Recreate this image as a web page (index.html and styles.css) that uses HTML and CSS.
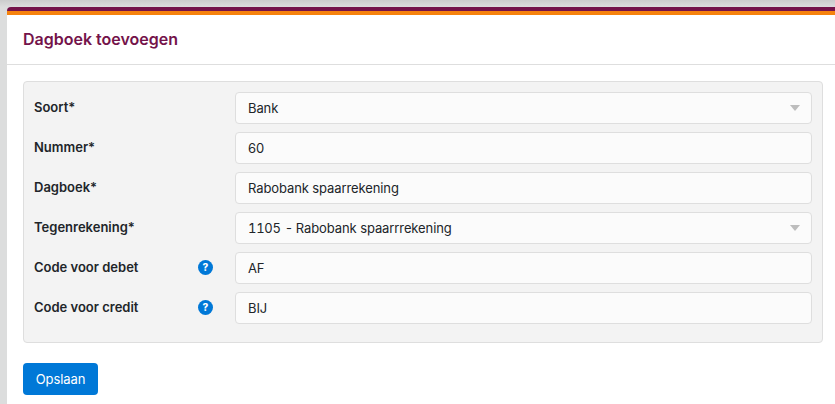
FILE: index.html
```html
<!DOCTYPE html>
<html lang="nl">
<head>
<meta charset="utf-8">
<title>Dagboek toevoegen</title>
<link rel="stylesheet" href="styles.css">
</head>
<body>
<main class="card">
  <header class="card-head"><h1>Dagboek toevoegen</h1></header>
  <form class="card-body">
    <div class="panel">
      <div class="row">
        <label class="lbl">Soort*</label>
        <div class="field select">Bank<span class="caret"></span></div>
      </div>
      <div class="row">
        <label class="lbl">Nummer*</label>
        <div class="field">60</div>
      </div>
      <div class="row">
        <label class="lbl">Dagboek*</label>
        <div class="field">Rabobank spaarrekening</div>
      </div>
      <div class="row">
        <label class="lbl">Tegenrekening*</label>
        <div class="field select"><span class="acct">1105 -</span>Rabobank spaarrrekening<span class="caret"></span></div>
      </div>
      <div class="row">
        <label class="lbl">Code voor debet<span class="help">?</span></label>
        <div class="field">AF</div>
      </div>
      <div class="row">
        <label class="lbl">Code voor credit<span class="help">?</span></label>
        <div class="field">BIJ</div>
      </div>
    </div>
    <button type="button" class="btn">Opslaan</button>
  </form>
</main>
</body>
</html>
```
FILE: styles.css
```css
* { box-sizing: border-box; }
html, body { margin: 0; height: 100%; }
body {
  padding: 7px 0 0 7px;
  overflow: hidden;
  background: linear-gradient(#cbcccc 0, #dcdddd 7px, #dcdddd 100%);
  font-family: Inter, "Liberation Sans", sans-serif;
  font-size: 14px;
  color: #212529;
}
.card {
  background: #fff;
  height: 397px;
  border-top: 4px solid #74134a;
  border-top-left-radius: 4px;
  position: relative;
}
.card-head {
  border-top: 4px solid #f5820d;
  height: 54px;
  border-bottom: 1px solid #dedede;
  padding: 0 16px;
  display: flex;
  align-items: center;
}
.card-head h1 {
  margin: 0 0 2px;
  font-size: 16px;
  font-weight: 600;
  color: #74134a;
}
.card-body { padding: 16px 12px 0 16px; }
.panel {
  background: #f3f3f3;
  border: 1px solid #dedede;
  border-radius: 4px;
  padding: 10px;
  height: 262px;
  display: flex;
  flex-direction: column;
  gap: 8px;
}
.row { display: flex; height: 32px; align-items: center; }
.lbl {
  width: 201px;
  flex: none;
  display: flex;
  align-items: center;
  justify-content: space-between;
  padding-right: 22px;
  font-weight: 600;
  font-size: 13px;
  margin-top: -2px;
}
.field {
  flex: 1;
  height: 32px;
  background: #fbfbfb;
  border: 1px solid #dedede;
  border-radius: 4px;
  padding: 0 12px;
  display: flex;
  align-items: center;
  font-size: 13px;
  letter-spacing: -0.1px;
  position: relative;
}
.acct {
  font-variant-numeric: tabular-nums;
  letter-spacing: -0.3px;
  margin-right: 3px;
  word-spacing: 1px;
}
.caret {
  position: absolute;
  right: 11px;
  top: 12px;
  border-left: 5px solid transparent;
  border-right: 5px solid transparent;
  border-top: 6px solid #bdbdbd;
}
.help {
  width: 15px;
  height: 15px;
  border-radius: 50%;
  background: #0078d7;
  color: #fff;
  font-size: 10px;
  font-weight: 800;
  display: flex;
  align-items: center;
  justify-content: center;
  line-height: 1;
}
.btn {
  display: block;
  margin-top: 20px;
  width: 75px;
  height: 32px;
  background: #0078d7;
  color: #fff;
  border: 0;
  border-radius: 4px;
  font: 400 13px Inter, "Liberation Sans", sans-serif;
  letter-spacing: -0.1px;
}
```
